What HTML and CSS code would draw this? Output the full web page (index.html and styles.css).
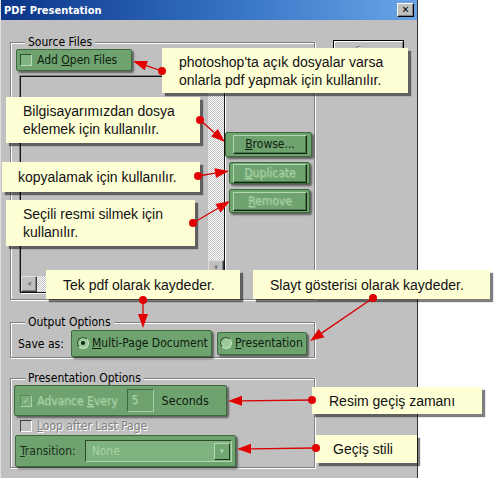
FILE: index.html
```html
<!DOCTYPE html>
<html>
<head>
<meta charset="utf-8">
<link rel="stylesheet" href="styles.css">
</head>
<body>
<div class="screen">
  <div class="dialog">
    <div class="titlebar">
      <span class="title">PDF Presentation</span>
      <span class="close">✕</span>
    </div>
    <div class="body">
      <div class="left">
        <div class="group source">
          <span class="group-label">Source Files</span>
          <div class="hl hl-add"><span class="cb"></span><span class="lbl">Add <u>O</u>pen Files</span></div>
          <div class="source-row">
            <div class="list">
              <div class="list-area"></div>
              <div class="vscroll"><span class="sbtn sbtn-down">▾</span></div>
              <div class="hscroll"><span class="sbtn sbtn-left">◂</span></div>
              <div class="corner"></div>
            </div>
            <div class="btns">
              <div class="hl hl-browse"><div class="btn"><u>B</u>rowse...</div></div>
              <div class="hl hl-dup"><div class="btn dis"><u>D</u>uplicate</div></div>
              <div class="hl hl-rem"><div class="btn dis"><u>R</u>emove</div></div>
            </div>
          </div>
        </div>

        <div class="group output">
          <span class="group-label">Output Options</span>
          <div class="out-row">
            <span class="saveas">Save as:</span>
            <div class="hl hl-multi"><span class="radio on"></span><span class="lbl"><u>M</u>ulti-Page Document</span></div>
            <div class="hl hl-pres"><span class="radio"></span><span class="lbl"><u>P</u>resentation</span></div>
          </div>
        </div>

        <div class="group pres">
          <span class="group-label">Presentation Options</span>
          <div class="hl hl-adv">
            <span class="cb checked">✓</span>
            <span class="lbl dis">Advance <u>E</u>very</span>
            <span class="num dis">5</span>
            <span class="lbl secs">Seconds</span>
          </div>
          <div class="loop-row"><span class="cb plain"></span><span class="lbl dis-grey"><u>L</u>oop after Last Page</span></div>
          <div class="hl hl-trans">
            <span class="lbl"><u>T</u>ransition:</span>
            <div class="select"><span class="sel-text">None</span><span class="sel-btn">▾</span></div>
          </div>
        </div>
      </div>
      <div class="right">
        <div class="btn save">Save</div>
      </div>
    </div>
  </div>

  <div class="callout c1">photoshop'ta açık dosyalar varsa<br>onlarla pdf yapmak için kullanılır.</div>
  <div class="callout c2">Bilgisayarımızdan dosya<br>eklemek için kullanılır.</div>
  <div class="callout c3">kopyalamak için kullanılır.</div>
  <div class="callout c4">Seçili resmi silmek için<br>kullanılır.</div>
  <div class="callout c5">Tek pdf olarak kaydeder.</div>
  <div class="callout c6">Slayt gösterisi olarak kaydeder.</div>
  <div class="callout c7">Resim geçiş zamanı</div>
  <div class="callout c8">Geçiş stili</div>

  <svg class="arrows" width="502" height="478" viewBox="0 0 502 478">
    <g stroke="#d80000" stroke-width="1.3" fill="none">
      <line x1="162" y1="71" x2="146.2" y2="65.6"/>
      <line x1="200" y1="120" x2="214.5" y2="132.8"/>
      <line x1="198" y1="176" x2="215.2" y2="173.2"/>
      <line x1="193" y1="223" x2="218" y2="208.2"/>
      <line x1="143" y1="300" x2="143" y2="314"/>
      <line x1="373" y1="298" x2="321.6" y2="333.1"/>
      <line x1="312" y1="400" x2="242" y2="400.8"/>
      <line x1="316" y1="448" x2="251" y2="448.8"/>
    </g>
    <g fill="#e00000">
      <circle cx="162" cy="71" r="4"/>
      <circle cx="200" cy="120" r="4"/>
      <circle cx="198" cy="176" r="4"/>
      <circle cx="193" cy="223" r="4"/>
      <circle cx="143" cy="300" r="4"/>
      <circle cx="373" cy="298" r="4"/>
      <circle cx="312" cy="400" r="4"/>
      <circle cx="316" cy="448" r="4"/>
      <polygon points="133,61 147.8,60.9 144.6,70.3"/>
      <polygon points="225,142 211.2,136.5 217.8,129"/>
      <polygon points="229,171 216,178.1 214.4,168.3"/>
      <polygon points="230,201 220.6,212.5 215.4,203.9"/>
      <polygon points="143,328 138,314 148,314"/>
      <polygon points="310,341 318.8,329 324.4,337.2"/>
      <polygon points="228,401 242,395.8 242,405.8"/>
      <polygon points="237,449 251,443.8 251,453.8"/>
    </g>
  </svg>
</div>
</body>
</html>
```
FILE: styles.css
```css
* { box-sizing: border-box; }
html, body { margin: 0; padding: 0; background: #fff; }

.screen {
  position: relative;
  width: 502px;
  height: 478px;
  overflow: hidden;
  background: #fff;
}

.dialog {
  width: 418px;
  height: 478px;
  background: #c0c0c0;
  border-left: 1px solid #dfdfdf;
  border-right: 1px solid #303030;
  font-family: "DejaVu Sans Condensed", "DejaVu Sans", sans-serif;
  font-size: 12px;
  color: #000;
  display: flex;
  flex-direction: column;
}

.titlebar {
  height: 20px;
  background: linear-gradient(to right, #0a3488, #3a78c8 60%, #6aa3e6);
  display: flex;
  align-items: center;
  justify-content: space-between;
  padding: 0 3px 0 3px;
}
.title {
  color: #fff;
  font-weight: bold;
  font-size: 11px;
}
.close {
  width: 17px;
  height: 14px;
  background: #c0c0c0;
  border-top: 1px solid #fff;
  border-left: 1px solid #fff;
  border-right: 1px solid #000;
  border-bottom: 1px solid #000;
  box-shadow: inset -1px -1px 0 #808080;
  font-size: 10px;
  font-weight: bold;
  line-height: 12px;
  text-align: center;
  color: #000;
}

.body {
  display: flex;
  padding: 22px 0 0 9px;
}
.left { width: 305px; }
.right { margin-left: 18px; margin-top: -2px; }

/* group boxes */
.group {
  position: relative;
  border: 1px solid #808080;
  box-shadow: inset 1px 1px 0 #fff, 1px 1px 0 #fff;
}
.group-label {
  position: absolute;
  top: -8px;
  left: 14px;
  padding: 0 3px;
  background: #c0c0c0;
  line-height: 14px;
  white-space: nowrap;
}
.source { padding: 6px 0 6px 5px; }
.output { margin-top: 22px; padding: 6px 0 0 7px; }
.pres { margin-top: 20px; padding: 6px 0 0 5px; }

/* green highlight */
.hl {
  background: #6ea26e;
  border: 1px solid #3c6a3c;
  border-radius: 2px;
  box-shadow: 2px 2px 2px rgba(0, 0, 0, 0.5);
  display: flex;
  align-items: center;
  color: #0f200f;
  white-space: nowrap;
}

.cb {
  width: 12px;
  height: 12px;
  flex: none;
  background: #80b480;
  border-top: 1px solid #2e4e2e;
  border-left: 1px solid #2e4e2e;
  border-right: 1px solid #b8dcb8;
  border-bottom: 1px solid #b8dcb8;
  font-size: 10px;
  line-height: 10px;
  text-align: center;
  color: #a8d4a8;
}
.cb.checked { background: #78ac78; border-color: #5a8a5a #a8d0a8 #a8d0a8 #5a8a5a; }
.cb.plain {
  background: #c0c0c0;
  border-color: #404040 #fff #fff #404040;
}

.hl-add {
  width: 116px;
  height: 22px;
  padding-left: 3px;
}
.hl-add .lbl { margin-left: 5px; }

.source-row { display: flex; margin-top: 5px; margin-left: 4px; }

.list {
  width: 205px;
  height: 217px;
  border: 1px solid #111;
  box-shadow: -1px -1px 0 #808080, 1px 1px 0 #fff;
  background: #c0c0c0;
  display: grid;
  grid-template-columns: 1fr 16px;
  grid-template-rows: 1fr 16px;
}
.vscroll, .hscroll {
  background-color: #fff;
  background-image: conic-gradient(#c0c0c0 25%, #fff 0 50%, #c0c0c0 0 75%, #fff 0);
  background-size: 2px 2px;
  display: flex;
}
.vscroll { flex-direction: column; justify-content: flex-end; }
.sbtn {
  width: 16px;
  height: 16px;
  background: #c0c0c0;
  border-top: 1px solid #dfdfdf;
  border-left: 1px solid #dfdfdf;
  border-right: 1px solid #404040;
  border-bottom: 1px solid #404040;
  box-shadow: inset -1px -1px 0 #808080;
  color: #808080;
  font-size: 9px;
  line-height: 13px;
  text-align: center;
}
.corner { background: #c0c0c0; }

.btns { display: flex; flex-direction: column; }
.hl-browse { width: 87px; height: 25px; margin-top: 56px; padding-left: 7px; }
.hl-dup { width: 81px; height: 22px; margin-top: 5px; margin-left: 4px; padding-left: 3px; }
.hl-rem { width: 81px; height: 24px; margin-top: 5px; margin-left: 4px; padding-left: 3px; }

.btn {
  width: 74px;
  height: 19px;
  border-top: 1px solid #b4d8b4;
  border-left: 1px solid #b4d8b4;
  border-right: 1px solid #102010;
  border-bottom: 1px solid #102010;
  box-shadow: inset -1px -1px 0 #4a7a4a;
  text-align: center;
  line-height: 16px;
  color: #0f200f;
}
.btn.dis, .dis {
  color: #a6d2a6;
  text-shadow: 1px 1px 0 #88b888;
}

.out-row { display: flex; align-items: center; height: 28px; margin-top: 0; }
.saveas { width: 53px; margin-top: 1px; }
.hl-multi { width: 141px; height: 27px; padding-left: 5px; }
.hl-pres { width: 90px; height: 23px; margin-left: 5px; padding-left: 2px; }
.radio {
  width: 12px;
  height: 12px;
  flex: none;
  border-radius: 50%;
  background: #9cca9c;
  border: 1px solid;
  border-color: #2e4e2e #c8e8c8 #c8e8c8 #2e4e2e;
  position: relative;
}
.radio.on::after {
  content: "";
  position: absolute;
  left: 3px;
  top: 3px;
  width: 4px;
  height: 4px;
  border-radius: 50%;
  background: #102010;
}
.hl-multi .lbl { margin-left: 3px; }
.hl-pres .lbl { margin-left: 3px; }

.hl-adv {
  width: 213px;
  height: 31px;
  margin-left: -2px;
  padding-left: 5px;
}
.hl-adv .lbl.dis { margin-left: 5px; }
.num {
  width: 27px;
  height: 23px;
  margin-left: 9px;
  border: 1px solid;
  border-color: #3c6a3c #a8d0a8 #a8d0a8 #3c6a3c;
  padding-left: 4px;
  line-height: 21px;
  font-size: 12px;
}
.secs { margin-left: 8px; font-size: 12.5px; }

.loop-row {
  display: flex;
  align-items: center;
  height: 19px;
  padding-left: 4px;
}
.loop-row .lbl { margin-left: 5px; }
.dis-grey { color: #808080; text-shadow: 1px 1px 0 #fff; }

.hl-trans {
  width: 221px;
  height: 32px;
  margin-left: -1px;
  padding-left: 4px;
}
.hl-trans .lbl { color: #1a301a; }
.select {
  width: 147px;
  height: 22px;
  margin-left: 9px;
  background: #7eb27e;
  border: 1px solid;
  border-color: #2a4a2a #b0d8b0 #b0d8b0 #2a4a2a;
  display: flex;
  align-items: center;
  justify-content: space-between;
  padding: 0 1px 0 6px;
}
.sel-text { color: #a8d4a8; font-size: 12px; }
.sel-btn {
  width: 16px;
  height: 17px;
  background: #72a672;
  border-top: 1px solid #b4d8b4;
  border-left: 1px solid #b4d8b4;
  border-right: 1px solid #1c341c;
  border-bottom: 1px solid #1c341c;
  color: #a8d4a8;
  font-size: 9px;
  line-height: 14px;
  text-align: center;
}

.save {
  width: 71px;
  height: 24px;
  border: 1px solid #000;
  background: #c0c0c0;
  box-shadow: inset 1px 1px 0 #fff, inset -1px -1px 0 #808080;
  color: #808080;
  text-shadow: 1px 1px 0 #fff;
  line-height: 20px;
}

/* callouts */
.callout {
  position: absolute;
  background: #ffffd6;
  box-shadow: 3px 3px 1px rgba(0, 0, 0, 0.5);
  font-family: "Liberation Sans", Arial, sans-serif;
  font-size: 14px;
  line-height: 18px;
  color: #111;
  padding-left: 17px;
  display: flex;
  flex-direction: column;
  justify-content: center;
  white-space: nowrap;
}
.c1 { left: 162px; top: 48px; width: 246px; height: 45px; }
.c2 { left: 6px; top: 97px; width: 194px; height: 46px; }
.c3 { left: 2px; top: 162px; width: 198px; height: 30px; padding-left: 16px; }
.c4 { left: 6px; top: 200px; width: 189px; height: 46px; }
.c5 { left: 46px; top: 270px; width: 194px; height: 29px; }
.c6 { left: 253px; top: 270px; width: 237px; height: 29px; }
.c7 { left: 312px; top: 387px; width: 170px; height: 27px; }
.c8 { left: 316px; top: 435px; width: 101px; height: 28px; }

.arrows {
  position: absolute;
  left: 0;
  top: 0;
  pointer-events: none;
}
```
